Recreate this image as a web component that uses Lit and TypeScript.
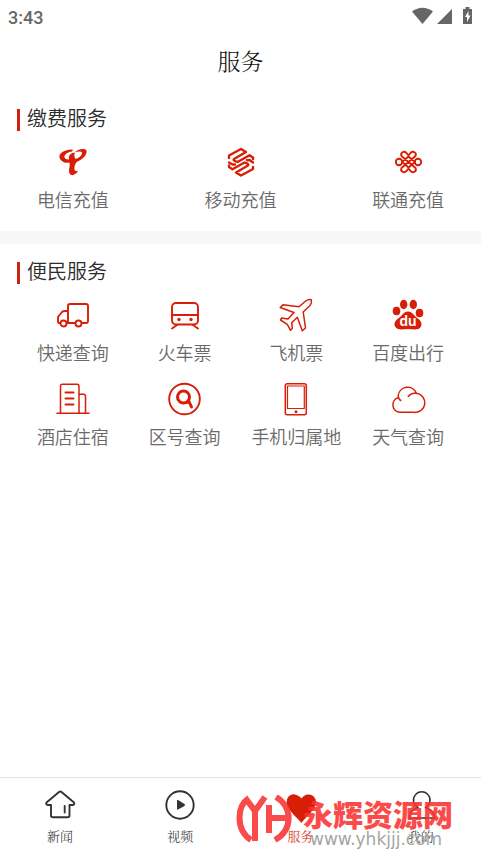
import { LitElement, html, css, svg, TemplateResult } from "lit";
import { customElement, property } from "lit/decorators.js";

type Icon = TemplateResult;

const telecom: Icon = svg`
  <path class="fill" d="M17 4.500C9 4 2.500 8 3.500 12.500C4.500 16.500 9 18.500 13.500 17.500C14.500 21 12.500 24 13 27C14 30.500 17 31 19 29C21 28 22 27 21.500 25.500C19 27 18 25 18.500 22C19 19 20 17.500 21.500 16.500C27.500 14 31.500 9 30.500 5.500C28.500 3 22.500 4 19 7C22.500 6.500 26.500 6 26 8.500C25.500 11 23 13 19.500 14C18 11.500 18 9.500 19 7.500C15 7.500 12 10.500 13 14.500C9.500 14.500 8 13 8.500 11C9.500 8.500 12.500 7 16 6.500Z"/>`;

const mobile: Icon = svg`
  <path class="line wide" d="M5 13V10.500L17 4L22 7L10 14Q9 15 10.500 15.800L13.500 17L25.500 10.200L29 12.500V14
    M5 17.500L8.500 19.500L11 19.500"/>
  <path class="line wide" d="M29 22V24L17 30.500L12 27.500L24 20.500Q25 19.500 23.500 18.700L20.500 17.500L8.500 24.300L5 22V20.500
    M29 17.500L25.500 15L23 15.200"/>`;

const unicom: Icon = svg`
  <path class="line heavy" d="M17.500 17L10.500 11C9 7.500 13 5.500 15.500 8L17.500 10.500L19.500 8C22 5.500 26 7.500 24.500 11L10.500 23C9 26.500 13 28.500 15.500 26L17.500 23.500L19.500 26C22 28.500 26 26.500 24.500 23Z
    M11 17L17.500 11.500L24 17L17.500 22.500Z"/>
  <circle class="line heavy" cx="8" cy="17" r="3.200"/>
  <circle class="line heavy" cx="27" cy="17" r="3.200"/>`;

const truck: Icon = svg`
  <path class="line heavy" d="M12 25V8Q12 6 14 6H30Q32 6 32 8V23Q32 25 30 25H26M19 25H11M4 25H3Q2 25 2 23V19L6 14Q7 13 9 13H12"/>
  <circle class="line heavy" cx="7.500" cy="25.500" r="3"/>
  <circle class="line heavy" cx="22.500" cy="25.500" r="3"/>`;

const train: Icon = svg`
  <rect class="line heavy" x="4" y="5" width="26" height="21.500" rx="4"/>
  <path class="line heavy" d="M4 17H30M9 27L4 30.500M25 27L30 30.500"/>
  <circle class="fill" cx="11" cy="21.500" r="1.700"/>
  <circle class="fill" cx="23" cy="21.500" r="1.700"/>`;

const plane: Icon = svg`
  <path class="line" d="M26.700 3L20 8.700L4 6.700L1.200 9.500L15 14.500L9 21L2.700 20L1.500 22L8.300 26.300L11.500 32.300L13.300 30.300L12.700 24.700L18.300 19.300L23.300 32.700L26.500 30L24.200 14L31 7.500Q33 4.500 32.300 1.700Q29.500 1 26.700 3Z"/>`;

const paw: Icon = svg`
  <ellipse class="fill" cx="5.500" cy="13" rx="3.800" ry="4.300"/>
  <ellipse class="fill" cx="12.700" cy="6.500" rx="3.700" ry="4.700"/>
  <ellipse class="fill" cx="22.300" cy="6.500" rx="3.700" ry="4.700"/>
  <ellipse class="fill" cx="28.500" cy="15" rx="3.800" ry="4.300"/>
  <path class="fill" d="M17 13.500C21 13.500 22.500 17 25.500 19.500C29.500 22 31.500 25 30 28.500C28 32.500 22 31.500 17 31C12 31.500 6.500 32.500 4 28.500C2.500 25 4.500 22 8.500 19.500C11.500 17 13 13.500 17 13.500Z"/>
  <text class="du" x="17" y="28" text-anchor="middle">du</text>`;

const hotel: Icon = svg`
  <path class="line" d="M1 31.300H33M4.500 31V4.500Q4.500 2.300 6.500 2.300H21Q23 2.300 23 4.500V31M23 12.300H27.500Q29.500 12.300 29.500 14.500V31"/>
  <path class="line heavy" d="M9.500 10.500H17.500M9.500 16.500H17.500M9.500 22.500H17.500"/>`;

const area: Icon = svg`
  <circle class="line heavy" cx="16.500" cy="17" r="15.300"/>
  <circle class="line bold" cx="15.500" cy="15" r="6"/>
  <path class="line bold" d="M18.500 20.500L21 19.500L23.500 25"/>`;

const phone: Icon = svg`
  <rect class="line" x="6.300" y="1.700" width="21" height="31" rx="2"/>
  <rect class="line thin" x="8.500" y="4" width="16.800" height="22.500"/>
  <circle class="fill" cx="17" cy="29.700" r="1.500"/>`;

const cloud: Icon = svg`
  <path class="line" d="M9.700 18.500Q7.200 17 7.200 13.500A9.500 9.500 0 0 1 25.500 11.300Q20 10.500 17.300 14.500M25.500 11.300A9.500 9.500 0 0 1 23 30.300H9A7.500 7.500 0 0 1 7 15.700"/>`;

const house: Icon = svg`
  <path class="line heavy" d="M8 17V27.500Q8 29.300 10 29.300H24.500Q26.500 29.300 26.500 27.500V17H30Q32 16 31 14.500L18.500 4Q17.300 3 16 4L3.500 14.500Q2.500 16 4.500 17ZM21.700 18V24.500"/>`;

const video: Icon = svg`
  <circle class="line heavy" cx="17" cy="17" r="13.700"/>
  <path class="fill" d="M14 12.500Q13.700 11.700 15 12L21.500 16Q22.500 17 21.500 18L15 21.500Q14 22 14 21Z"/>`;

const heart: Icon = svg`
  <path class="fill" d="M17.500 35C15 31.500 4.500 23 3 16.500C1.500 9 7 5.500 11 6.500C14 7 16.500 9 17.500 10.500C19 8 22 6 25 6.500C30 7 33 11 31.500 16.500C30 23 20 31 17.500 35Z"/>`;

const person: Icon = svg`
  <path class="line" d="M14 19.500A8.300 8.300 0 1 1 21.500 19.500Q30 22 31 30H5Q6 22 14 19.500Z"/>`;

@customElement("svg-icon")
class SvgIcon extends LitElement {
  @property({ attribute: false }) art?: Icon;

  static styles = css`
    :host { display: block; width: 34px; height: 34px; }
    .art { display: block; width: 100%; height: 100%; overflow: visible; }
    .fill { fill: currentColor; }
    .line { fill: none; stroke: currentColor; stroke-width: 1.5; stroke-linecap: round; stroke-linejoin: round; }
    .heavy { stroke-width: 1.900; }
    .wide { stroke-width: 2.400; }
    .bold { stroke-width: 3; }
    .thin { stroke-width: 1.200; }
    .du { font: bold 14px "Liberation Sans", sans-serif; fill: #fff; }
  `;

  render() {
    return html`<svg class="art" viewBox="0 0 34 34" aria-hidden="true">${this.art}</svg>`;
  }
}

interface Entry { label: string; art: Icon; }

@customElement("service-section")
class ServiceSection extends LitElement {
  @property() heading = "";
  @property({ attribute: false }) entries: Entry[] = [];

  static styles = css`
    :host { display: block; padding: 13px 17px 2px; }
    .heading {
      display: flex; align-items: flex-start; gap: 7px; margin: 0; height: 41px;
      font-size: 20px; line-height: 28px; font-weight: 350; color: #2c2c2c;
    }
    .heading::before { content: ""; width: 3px; height: 22px; margin-top: 5px; background: #cf2010; }
    .grid { display: flex; flex-wrap: wrap; justify-content: space-between; }
    .entry {
      width: 25%; height: 84px; padding: 0; border: 0; background: none;
      display: flex; flex-direction: column; align-items: center; gap: 7px;
      font: inherit; font-weight: 350; font-size: 18px; line-height: 26px; color: #6a6a6a; white-space: nowrap;
    }
    .icon { color: #d81e06; }
  `;

  render() {
    return html`
      <h2 class="heading">${this.heading}</h2>
      <div class="grid">
        ${this.entries.map((e) => html`
          <button class="entry" type="button">
            <svg-icon class="icon" .art=${e.art}></svg-icon>
            <span>${e.label}</span>
          </button>`)}
      </div>`;
  }
}

@customElement("app-root")
class AppRoot extends LitElement {
  static styles = css`
    :host {
      display: flex; flex-direction: column; min-height: 100vh; background: #fff;
      font-family: "Noto Sans CJK SC", sans-serif;
    }
    .status {
      display: flex; justify-content: space-between; align-items: center;
      height: 34px; padding: 0 8px; box-sizing: border-box; color: #666;
      font: 500 18px Roboto, sans-serif;
    }
    .signals { width: 62px; height: 20px; }
    .title {
      margin: 0; height: 57px; line-height: 54px; text-align: center;
      font-family: "Noto Serif CJK SC", "Noto Sans CJK SC", serif;
      font-size: 23px; font-weight: 350; color: #111;
    }
    .divider { height: 13px; background: #f7f7f7; }
    .nav {
      position: relative; display: flex; margin-top: auto;
      height: 78px; box-sizing: border-box; border-top: 1px solid #e4e4e4;
    }
    .tab {
      flex: 1; padding-top: 10px; display: flex; flex-direction: column; align-items: center; gap: 4px;
      font-family: "Noto Serif CJK SC", "Noto Sans CJK SC", serif;
      font-size: 13px; line-height: 20px; font-weight: 350; color: #333; text-decoration: none;
    }
    .current { color: #d81e06; }
    .mark {
      position: absolute; right: 28px; bottom: 8px;
      display: flex; align-items: flex-start; gap: 11px; pointer-events: none; color: #fa3232; opacity: 0.88;
    }
    .logo { width: 56px; height: 48px; margin-top: 1px; }
    .strokes { fill: none; stroke: currentColor; stroke-width: 6; }
    .words { display: flex; flex-direction: column; }
    .name { font-size: 30px; line-height: 38px; font-weight: 900; }
    .site { font: 17px/15px "DejaVu Sans", sans-serif; color: #999; padding-left: 7px; }
  `;

  private readonly payments: Entry[] = [
    { label: "电信充值", art: telecom },
    { label: "移动充值", art: mobile },
    { label: "联通充值", art: unicom },
  ];

  private readonly services: Entry[] = [
    { label: "快递查询", art: truck },
    { label: "火车票", art: train },
    { label: "飞机票", art: plane },
    { label: "百度出行", art: paw },
    { label: "酒店住宿", art: hotel },
    { label: "区号查询", art: area },
    { label: "手机归属地", art: phone },
    { label: "天气查询", art: cloud },
  ];

  private readonly tabs: Entry[] = [
    { label: "新闻", art: house },
    { label: "视频", art: video },
    { label: "服务", art: heart },
    { label: "我的", art: person },
  ];

  render() {
    return html`
      <header>
        <div class="status">
          <span>3:43</span>
          <svg class="signals" viewBox="0 0 62 20" fill="currentColor" aria-hidden="true">
            <path d="M1 4.500Q11.500-3 22 4.500L11.500 17Z"/>
            <path d="M41 2V17H26Z"/>
            <path fill-rule="evenodd" d="M52 2H54.500V0H58.500V2H61V17H52ZM57.500 4L54 10H56V15L59.500 8.500H57.500Z"/>
          </svg>
        </div>
        <h1 class="title">服务</h1>
      </header>
      <main>
        <service-section heading="缴费服务" .entries=${this.payments}></service-section>
        <div class="divider"></div>
        <service-section heading="便民服务" .entries=${this.services}></service-section>
      </main>
      <nav class="nav">
        ${this.tabs.map((t) => html`
          <a class="tab ${t.art === heart ? "current" : ""}" href="#">
            <svg-icon .art=${t.art}></svg-icon>
            <span>${t.label}</span>
          </a>`)}
        <div class="mark">
          <svg class="logo" viewBox="0 0 56 48" aria-hidden="true">
            <path class="strokes" d="M13 3C1 11-1 34 15 45M10 4L19 16L29 2M19 15V46M40 2C57 12 57 35 39 45M33 10V38M33 23H52"/>
          </svg>
          <div class="words">
            <span class="name">永辉资源网</span>
            <span class="site">www.yhkjjj.com</span>
          </div>
        </div>
      </nav>`;
  }
}
